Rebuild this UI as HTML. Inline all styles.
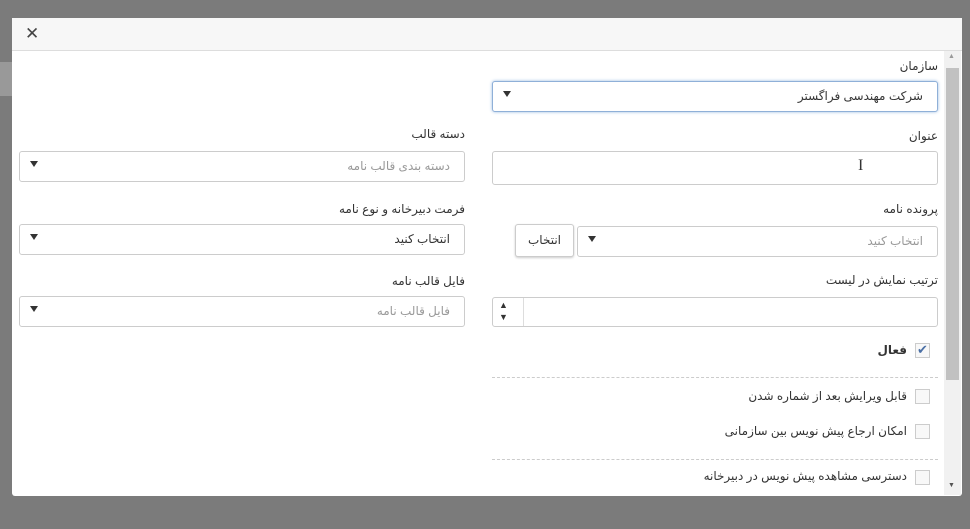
<!DOCTYPE html>
<html><head><meta charset="utf-8"><style>
body{margin:0;width:970px;height:529px;background:#7b7b7b;position:relative;overflow:hidden;font-family:"Liberation Sans","DejaVu Sans",sans-serif;font-size:12px;color:#333}
.a{position:absolute}
#modal{left:12px;top:18px;width:950px;height:478px;background:#fff;border-radius:3px}
#hdr{left:12px;top:18px;width:950px;height:32px;background:#f7f7f7;border-bottom:1px solid #ddd}
.lbl{direction:rtl;text-align:right;font-size:12px;color:#333}
.box{border:1px solid #ccc;border-radius:3px;background:#fff;box-sizing:border-box}
.ph{direction:rtl;font-size:12px;color:#999;position:absolute;right:14px;top:7px}
.val{color:#333}
.arr{position:absolute;left:10px;top:9px;width:0;height:0;border-left:4px solid transparent;border-right:4px solid transparent;border-top:6px solid #333}
.cb{width:15px;height:15px;border:1px solid #ccc;background:#f8f8f8;box-sizing:border-box}
.dash{border-top:1px dashed #ccc;height:0}
</style></head><body>
<div class="a" style="left:0;top:62px;width:12px;height:34px;background:#999"></div>
<div class="a" id="modal"></div>
<div class="a" id="hdr"><span class="a" style="left:13px;top:6px;font-size:17px;font-weight:bold;color:#444">✕</span></div>

<!-- right column -->
<div class="a lbl" style="right:32px;top:59px">سازمان</div>
<div class="a box" style="left:492px;top:81px;width:446px;height:31px;border-color:#8fb0d8;box-shadow:0 0 3px #9bbbe0"><span class="ph val">شرکت مهندسی فراگستر</span><span class="arr"></span></div>

<div class="a lbl" style="right:32px;top:129px">عنوان</div>
<div class="a box" style="left:492px;top:151px;width:446px;height:34px"><span class="a" style="left:365px;top:5px;font-size:16px;color:#333;font-family:'Liberation Serif',serif">I</span></div>

<div class="a lbl" style="right:32px;top:202px">پرونده نامه</div>
<div class="a box" style="left:577px;top:226px;width:361px;height:31px"><span class="ph">انتخاب کنید</span><span class="arr"></span></div>
<div class="a box" style="left:515px;top:224px;width:59px;height:33px;box-shadow:0 1px 2px #ccc;direction:rtl;text-align:center;line-height:31px">انتخاب</div>

<div class="a lbl" style="right:32px;top:273px">ترتیب نمایش در لیست</div>
<div class="a box" style="left:492px;top:297px;width:446px;height:30px"><div class="a" style="left:0;top:0;width:30px;height:28px;border-right:1px solid #ddd"><span class="a" style="left:6px;top:2px;font-size:9px">▲</span><span class="a" style="left:6px;top:14px;font-size:9px">▼</span></div></div>

<div class="a cb" style="left:915px;top:343px"><span class="a" style="left:1px;top:-2px;color:#4a6fa5;font-size:13px">✔</span></div>
<div class="a lbl" style="right:63px;top:343px;font-weight:bold">فعال</div>
<div class="a dash" style="left:492px;top:377px;width:446px"></div>
<div class="a cb" style="left:915px;top:389px"></div>
<div class="a lbl" style="right:63px;top:389px">قابل ویرایش بعد از شماره شدن</div>
<div class="a cb" style="left:915px;top:424px"></div>
<div class="a lbl" style="right:63px;top:424px">امکان ارجاع پیش نویس بین سازمانی</div>
<div class="a dash" style="left:492px;top:459px;width:446px"></div>
<div class="a cb" style="left:915px;top:470px"></div>
<div class="a lbl" style="right:63px;top:469px">دسترسی مشاهده پیش نویس در دبیرخانه</div>

<!-- left column -->
<div class="a lbl" style="right:505px;top:127px">دسته قالب</div>
<div class="a box" style="left:19px;top:151px;width:446px;height:31px"><span class="ph">دسته بندی قالب نامه</span><span class="arr"></span></div>
<div class="a lbl" style="right:505px;top:202px">فرمت دبیرخانه و نوع نامه</div>
<div class="a box" style="left:19px;top:224px;width:446px;height:31px"><span class="ph val">انتخاب کنید</span><span class="arr"></span></div>
<div class="a lbl" style="right:505px;top:274px">فایل قالب نامه</div>
<div class="a box" style="left:19px;top:296px;width:446px;height:31px"><span class="ph">فایل قالب نامه</span><span class="arr"></span></div>

<!-- scrollbar -->
<div class="a" style="left:944px;top:51px;width:17px;height:444px;background:#f1f1f1"></div>
<div class="a" style="left:946px;top:68px;width:13px;height:312px;background:#c1c1c1"></div>
<span class="a" style="left:948px;top:53px;font-size:7px;color:#999">▲</span>
<span class="a" style="left:948px;top:482px;font-size:7px;color:#555">▼</span>
</body></html>
